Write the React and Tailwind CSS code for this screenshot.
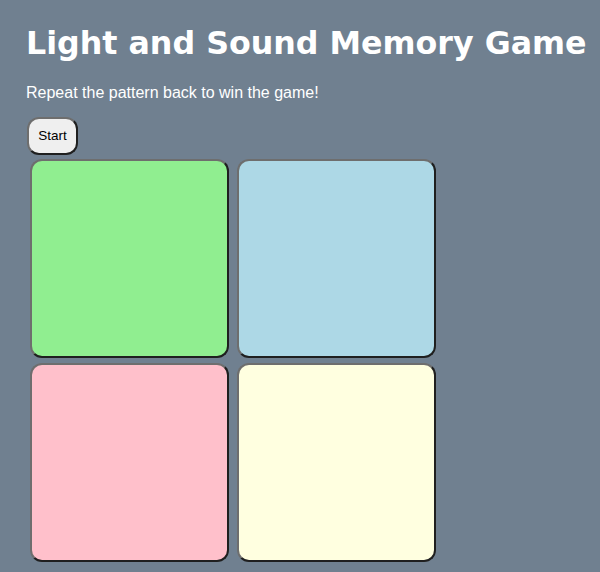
import React from "react";

const pads = [
  { id: 1, color: "bg-[#90ee90]" },
  { id: 2, color: "bg-[#add8e6]" },
  { id: 3, color: "bg-[#ffc0cb]" },
  { id: 4, color: "bg-[#ffffe0]" },
];

function App() {
  return (
    <div className="min-h-screen bg-[#708090] px-[26px] pt-[25px] font-['Liberation_Sans',Arial,sans-serif]">
      <h1 className="text-[31.7px] leading-[37px] font-bold text-white font-['DejaVu_Sans',Verdana,sans-serif] whitespace-nowrap">
        Light and Sound Memory Game
      </h1>

      <p className="mt-[22px] text-base leading-[18px] text-white">
        Repeat the pattern back to win the game!
      </p>

      <button className="mt-[15px] ml-[1px] h-[38px] w-[51px] rounded-[12px] border-2 border-[#1f1f1f] border-t-[#6e6e6e] border-l-[#6e6e6e] bg-[#efefef] text-[13.5px] text-black">
        Start
      </button>

      {/* game pads */}
      <div className="mt-[4px] ml-[4px] grid w-max grid-cols-[199px_199px] gap-x-[8px] gap-y-[5px]">
        {pads.map((p) => (
          <button
            key={p.id}
            className={`h-[199px] w-[199px] rounded-[12px] border-2 border-[#1f1f1f] border-t-[#6e6e6e] border-l-[#6e6e6e] ${p.color}`}
          />
        ))}
      </div>
    </div>
  );
}

export default App;
